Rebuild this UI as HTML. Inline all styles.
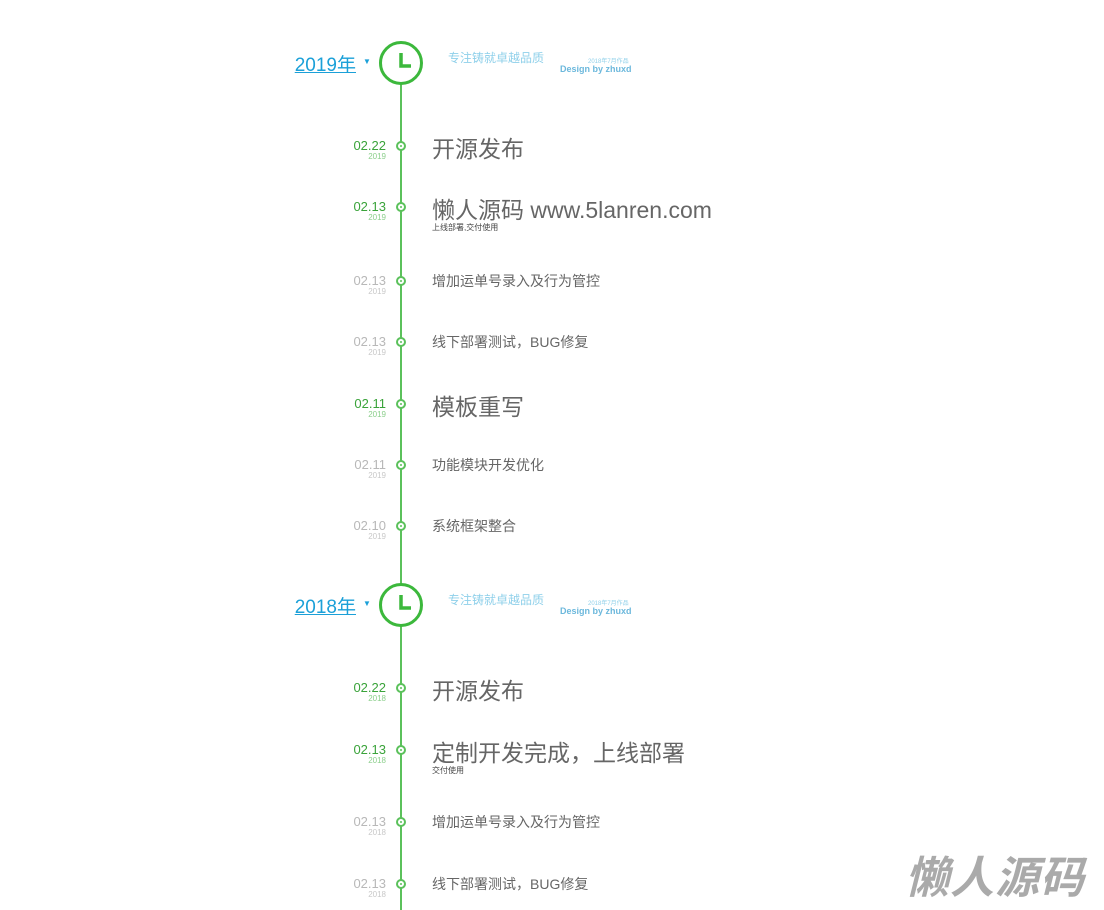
<!DOCTYPE html>
<html><head><meta charset="utf-8"><style>
body{margin:0;width:1104px;height:905px;background:#fff;overflow:hidden;position:relative;font-family:"Liberation Sans","Noto Sans CJK SC",sans-serif}
.a{position:absolute}
.line{left:400px;top:80px;width:2px;height:830px;background:#5bc15b}
.yr{font-size:19px;color:#1ba0d8;text-decoration:underline;width:78px;text-align:right}
.car{font-size:8px;color:#1ba0d8}
.clk{width:38px;height:38px;border:3px solid #3cb83c;border-radius:50%;background:#fff}
.slog{font-size:12px;color:#8fd0ea}
.dz{font-size:8px;color:#8fd0ea;transform:scale(.75);transform-origin:left top}
.dg{font-size:9px;color:#6cb8dc;font-weight:bold}
.dot{width:6px;height:6px;border:2px solid #5bc15b;border-radius:50%;background:#fff}
.dot:after{content:"";position:absolute;left:2px;top:2px;width:2px;height:2px;background:#5bc15b;border-radius:50%}
.d{width:60px;text-align:right;font-size:13px;line-height:13px}
.d b{font-weight:normal;display:block}
.d i{font-style:normal;display:block;font-size:8px;line-height:9px}
.g{color:#3aa33a}.g i{color:#8ccf8c}
.s{color:#b8b8b8}.s i{color:#c8c8c8}
.big{font-size:23px;color:#666}
.sm{font-size:14px;color:#666}
.sub{font-size:8px;color:#444}
.logo{font-size:44px;font-weight:bold;font-style:italic;color:#aaa;letter-spacing:1px}
</style></head><body>
<div class="a line"></div>

<div class="a yr" style="left:278px;top:50px">2019年</div>
<div class="a car" style="left:363px;top:57px">▼</div>
<div class="a clk" style="left:379px;top:41px"><svg width="38" height="38" style="position:absolute;left:0;top:0"><path d="M19 9V22H29" stroke="#3cb83c" stroke-width="3.5" fill="none"/></svg></div>
<div class="a slog" style="left:448px;top:49px">专注铸就卓越品质</div>
<div class="a dz" style="left:588px;top:57px">2018年7月作品</div>
<div class="a dg" style="left:560px;top:64px">Design by zhuxd</div>

<div class="a yr" style="left:278px;top:592px">2018年</div>
<div class="a car" style="left:363px;top:599px">▼</div>
<div class="a clk" style="left:379px;top:583px"><svg width="38" height="38" style="position:absolute;left:0;top:0"><path d="M19 9V22H29" stroke="#3cb83c" stroke-width="3.5" fill="none"/></svg></div>
<div class="a slog" style="left:448px;top:591px">专注铸就卓越品质</div>
<div class="a dz" style="left:588px;top:599px">2018年7月作品</div>
<div class="a dg" style="left:560px;top:606px">Design by zhuxd</div>

<!-- 2019 -->
<div class="a dot" style="left:396px;top:141px"></div><div class="a d g" style="left:326px;top:139px"><b>02.22</b><i>2019</i></div><div class="a big" style="left:432px;top:130px">开源发布</div>
<div class="a dot" style="left:396px;top:202px"></div><div class="a d g" style="left:326px;top:200px"><b>02.13</b><i>2019</i></div><div class="a big" style="left:432px;top:191px">懒人源码 www.5lanren.com</div><div class="a sub" style="left:432px;top:222px">上线部署,交付使用</div>
<div class="a dot" style="left:396px;top:276px"></div><div class="a d s" style="left:326px;top:274px"><b>02.13</b><i>2019</i></div><div class="a sm" style="left:432px;top:271px">增加运单号录入及行为管控</div>
<div class="a dot" style="left:396px;top:337px"></div><div class="a d s" style="left:326px;top:335px"><b>02.13</b><i>2019</i></div><div class="a sm" style="left:432px;top:332px">线下部署测试，BUG修复</div>
<div class="a dot" style="left:396px;top:399px"></div><div class="a d g" style="left:326px;top:397px"><b>02.11</b><i>2019</i></div><div class="a big" style="left:432px;top:388px">模板重写</div>
<div class="a dot" style="left:396px;top:460px"></div><div class="a d s" style="left:326px;top:458px"><b>02.11</b><i>2019</i></div><div class="a sm" style="left:432px;top:455px">功能模块开发优化</div>
<div class="a dot" style="left:396px;top:521px"></div><div class="a d s" style="left:326px;top:519px"><b>02.10</b><i>2019</i></div><div class="a sm" style="left:432px;top:516px">系统框架整合</div>

<!-- 2018 -->
<div class="a dot" style="left:396px;top:683px"></div><div class="a d g" style="left:326px;top:681px"><b>02.22</b><i>2018</i></div><div class="a big" style="left:432px;top:672px">开源发布</div>
<div class="a dot" style="left:396px;top:745px"></div><div class="a d g" style="left:326px;top:743px"><b>02.13</b><i>2018</i></div><div class="a big" style="left:432px;top:734px">定制开发完成，上线部署</div><div class="a sub" style="left:432px;top:765px">交付使用</div>
<div class="a dot" style="left:396px;top:817px"></div><div class="a d s" style="left:326px;top:815px"><b>02.13</b><i>2018</i></div><div class="a sm" style="left:432px;top:812px">增加运单号录入及行为管控</div>
<div class="a dot" style="left:396px;top:879px"></div><div class="a d s" style="left:326px;top:877px"><b>02.13</b><i>2018</i></div><div class="a sm" style="left:432px;top:874px">线下部署测试，BUG修复</div>

<div class="a logo" style="left:905px;top:842px">懒人源码</div>
</body></html>
